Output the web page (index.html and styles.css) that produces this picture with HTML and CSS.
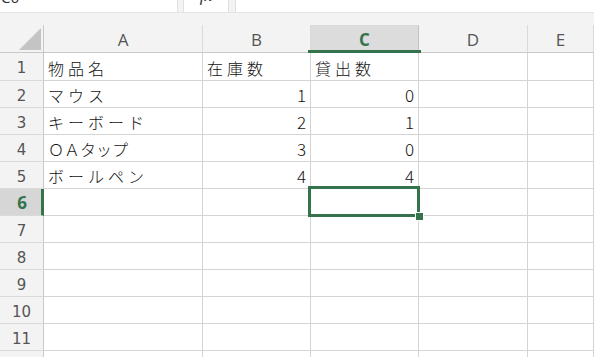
FILE: index.html
```html
<!doctype html>
<html>
<head>
<meta charset="utf-8">
<title>Book1 - Excel</title>
<link rel="stylesheet" href="styles.css">
</head>
<body>
	<div class="fbar">
		<div class="namebox"><span>C6</span></div>
		<div class="fxbox"><span>fx</span></div>
		<div class="input"></div>
	</div>
	<div class="band"></div>
	<div class="sheet">
		<div class="hd corner"><svg width="22" height="22" viewBox="0 0 22 22"><polygon points="22,0 22,22 0,22" fill="#c4c4c4"/></svg></div>
		<div class="hd col">A</div>
		<div class="hd col">B</div>
		<div class="hd col on">C</div>
		<div class="hd col">D</div>
		<div class="hd col">E</div>

		<div class="hd row r1">1</div>
		<div class="cell">物品名</div>
		<div class="cell">在庫数</div>
		<div class="cell">貸出数</div>
		<div class="cell"></div>
		<div class="cell"></div>

		<div class="hd row">2</div>
		<div class="cell">マウス</div>
		<div class="cell num">1</div>
		<div class="cell num">0</div>
		<div class="cell"></div>
		<div class="cell"></div>

		<div class="hd row">3</div>
		<div class="cell">キーボード</div>
		<div class="cell num">2</div>
		<div class="cell num">1</div>
		<div class="cell"></div>
		<div class="cell"></div>

		<div class="hd row">4</div>
		<div class="cell tight">ＯＡタップ</div>
		<div class="cell num">3</div>
		<div class="cell num">0</div>
		<div class="cell"></div>
		<div class="cell"></div>

		<div class="hd row">5</div>
		<div class="cell">ボールペン</div>
		<div class="cell num">4</div>
		<div class="cell num">4</div>
		<div class="cell"></div>
		<div class="cell"></div>

		<div class="hd row on">6</div>
		<div class="cell"></div>
		<div class="cell"></div>
		<div class="cell sel"></div>
		<div class="cell"></div>
		<div class="cell"></div>

		<div class="hd row">7</div>
		<div class="cell"></div><div class="cell"></div><div class="cell"></div><div class="cell"></div><div class="cell"></div>
		<div class="hd row">8</div>
		<div class="cell"></div><div class="cell"></div><div class="cell"></div><div class="cell"></div><div class="cell"></div>
		<div class="hd row">9</div>
		<div class="cell"></div><div class="cell"></div><div class="cell"></div><div class="cell"></div><div class="cell"></div>
		<div class="hd row">10</div>
		<div class="cell"></div><div class="cell"></div><div class="cell"></div><div class="cell"></div><div class="cell"></div>
		<div class="hd row">11</div>
		<div class="cell"></div><div class="cell"></div><div class="cell"></div><div class="cell"></div><div class="cell"></div>
		<div class="hd row">12</div>
		<div class="cell"></div><div class="cell"></div><div class="cell"></div><div class="cell"></div><div class="cell"></div>
	</div>
</body>
</html>
```

FILE: styles.css
```css
*{
	margin:0;
	padding:0;
	box-sizing:border-box;
}
body{
	width:594px;
	height:357px;
	overflow:hidden;
	background:#fff;
	font-family:"Noto Sans CJK JP", sans-serif;
}

/* formula bar, only its lower edge is in view */
.fbar{
	display:flex;
	height:13px;
	background:#f3f3f3;
	border-bottom:1px solid #e3e3e3;
	overflow:hidden;
}
.namebox{
	width:178px;
	background:#fff;
	border-right:1px solid #e1e1e1;
	color:#333;
	font:15px "Open Sans", sans-serif;
}
.namebox span{
	display:block;
	line-height:20px;
	margin-top:-13px;
	padding-left:1px;
}
.fxbox{
	width:46px;
	margin-left:5px;
	background:#fff;
	border-left:1px solid #e1e1e1;
	border-right:1px solid #e1e1e1;
	text-align:center;
	font:italic 17px "Liberation Serif", serif;
	color:#333;
}
.fxbox span{
	display:block;
	line-height:20px;
	margin-top:-14px;
}
.input{
	flex:1;
	margin-left:6px;
	background:#fff;
	border-left:1px solid #e1e1e1;
}
.band{
	height:12px;
	background:#f3f3f3;
}

/* grid */
.sheet{
	display:grid;
	grid-template-columns:44px 159px 108px 108px 109px 1fr;
	grid-template-rows:28px 28px;
	grid-auto-rows:27px;
}
.hd{
	background:#f3f3f3;
	color:#555;
	display:flex;
	align-items:center;
	justify-content:center;
}
.corner{
	border-right:1px solid #c8c8c8;
	border-bottom:1px solid #c8c8c8;
	align-items:flex-end;
	justify-content:flex-end;
	padding:0 2px 2px 0;
}
.corner svg{
	display:block;
}
.col{
	border-right:1px solid #dadada;
	border-bottom:1px solid #c8c8c8;
	font:17px "Open Sans", sans-serif;
	padding-top:1px;
}
.col.on{
	position:relative;
	background:#dcdcdc;
	border-right-color:#c4c4c4;
	color:#35734c;
	font-weight:700;
}
.col.on::after{
	content:"";
	position:absolute;
	left:-3px;
	right:-3px;
	bottom:-1px;
	height:3px;
	background:#35734c;
}
.row{
	border-right:1px solid #c8c8c8;
	border-bottom:1px solid #dadada;
	font:15px "DejaVu Sans", sans-serif;
	color:#555;
	padding-top:3px;
}
.row.on{
	background:#d6d6d6;
	border-right:3px solid #35734c;
	color:#35734c;
	font:700 17px "Open Sans", sans-serif;
	padding:1px 0 0 3px;
}
.cell{
	border-right:1px solid #d4d4d4;
	border-bottom:1px solid #d4d4d4;
	display:flex;
	align-items:flex-end;
	padding:0 4px 1px 4px;
	font-size:16px;
	font-weight:300;
	line-height:22px;
	letter-spacing:4px;
	color:#111;
	white-space:nowrap;
}
.tight{
	letter-spacing:0;
}
.num{
	justify-content:flex-end;
	letter-spacing:0;
	font-size:17px;
}
.sel{
	position:relative;
}
.sel::after{
	content:"";
	position:absolute;
	left:-3px;
	top:-3px;
	right:-2px;
	bottom:-2px;
	border:3px solid #35734c;
}
.sel::before{
	content:"";
	position:absolute;
	right:-6px;
	bottom:-6px;
	width:7px;
	height:7px;
	background:#35734c;
	border:1px solid #fff;
	z-index:1;
}
```
